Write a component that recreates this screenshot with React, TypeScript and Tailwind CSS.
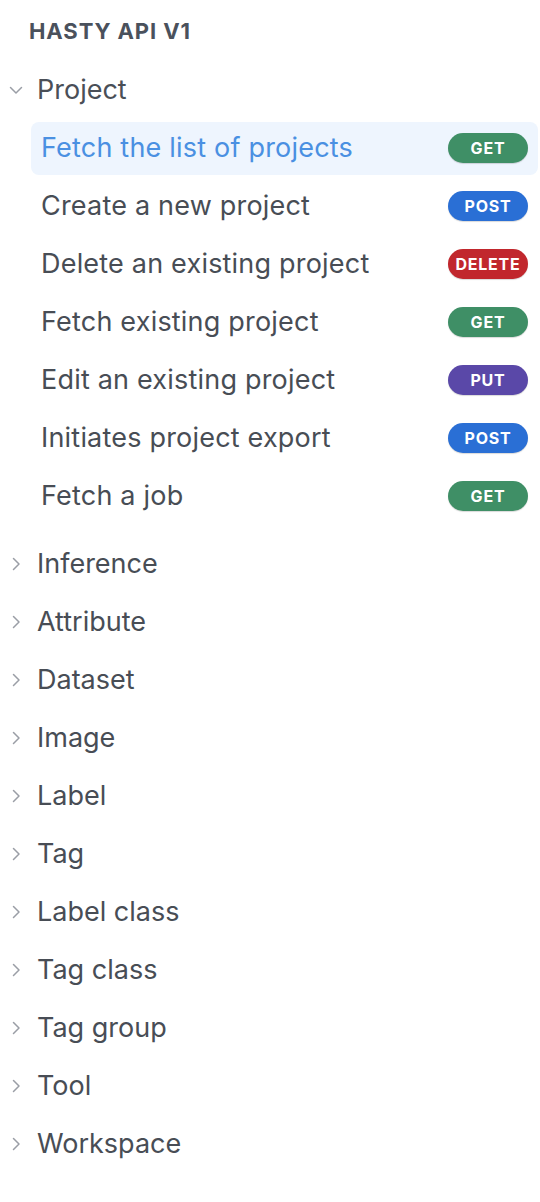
import React from "react";

type Method = "GET" | "POST" | "DELETE" | "PUT";

const badgeClass: Record<Method, string> = {
  GET: "bg-[#3f8f66]",
  POST: "bg-[#2a6fd5]",
  DELETE: "bg-[#c1272d]",
  PUT: "bg-[#5a48a8]",
};

const items: { label: string; method: Method; active?: boolean }[] = [
  { label: "Fetch the list of projects", method: "GET", active: true },
  { label: "Create a new project", method: "POST" },
  { label: "Delete an existing project", method: "DELETE" },
  { label: "Fetch existing project", method: "GET" },
  { label: "Edit an existing project", method: "PUT" },
  { label: "Initiates project export", method: "POST" },
  { label: "Fetch a job", method: "GET" },
];

const groups = [
  "Inference",
  "Attribute",
  "Dataset",
  "Image",
  "Label",
  "Tag",
  "Label class",
  "Tag class",
  "Tag group",
  "Tool",
  "Workspace",
];

function ChevronDown() {
  return (
    <svg width="16" height="16" viewBox="0 0 16 16" fill="none" className="shrink-0">
      <path d="M2.5 5.5 L8 11 L13.5 5.5" stroke="#9a9ea6" strokeWidth="1.5" strokeLinecap="round" strokeLinejoin="round" />
    </svg>
  );
}

function ChevronRight() {
  return (
    <svg width="16" height="16" viewBox="0 0 16 16" fill="none" className="shrink-0">
      <path d="M5.5 2.5 L11 8 L5.5 13.5" stroke="#9a9ea6" strokeWidth="1.5" strokeLinecap="round" strokeLinejoin="round" />
    </svg>
  );
}

export default function App() {
  return (
    <div
      className="w-[540px] min-h-[1202px] bg-white pt-[17px]"
      style={{ fontFamily: "Inter, 'Noto Sans', sans-serif" }}
    >
      <div className="pl-[29px] h-[28px] leading-[28px] text-[22px] font-bold text-[#4a515c] tracking-[0.9px] mb-[16px]">
        HASTY API V1
      </div>

      <div className="flex items-center h-[58px] pl-[8px] gap-[13px]">
        <ChevronDown />
        <span className="text-[27px] text-[#4a4f57]">Project</span>
      </div>

      <div className="flex flex-col mb-[10px]">
        {items.map((it) => (
          <div key={it.label} className="h-[58px] flex items-center pl-[31px] pr-[2px]">
            <div
              className={
                "flex-1 h-[53px] flex items-center justify-between pl-[10px] pr-[10px] rounded-[8px] " +
                (it.active ? "bg-[#eef5fe]" : "")
              }
            >
              <span
                className={
                  "text-[27px] tracking-[0.2px] " + (it.active ? "text-[#4a90e2]" : "text-[#484d55]")
                }
              >
                {it.label}
              </span>
              <span
                className={
                  "w-[80px] h-[30px] rounded-full flex items-center justify-center text-white text-[16px] font-bold tracking-[0.8px] shadow-[0_1px_1px_rgba(0,0,0,0.15)] " +
                  badgeClass[it.method]
                }
              >
                {it.method}
              </span>
            </div>
          </div>
        ))}
      </div>

      {groups.map((g) => (
        <div key={g} className="flex items-center h-[58px] pl-[8px] gap-[13px]">
          <ChevronRight />
          <span className="text-[27px] text-[#484d55]">{g}</span>
        </div>
      ))}
    </div>
  );
}
